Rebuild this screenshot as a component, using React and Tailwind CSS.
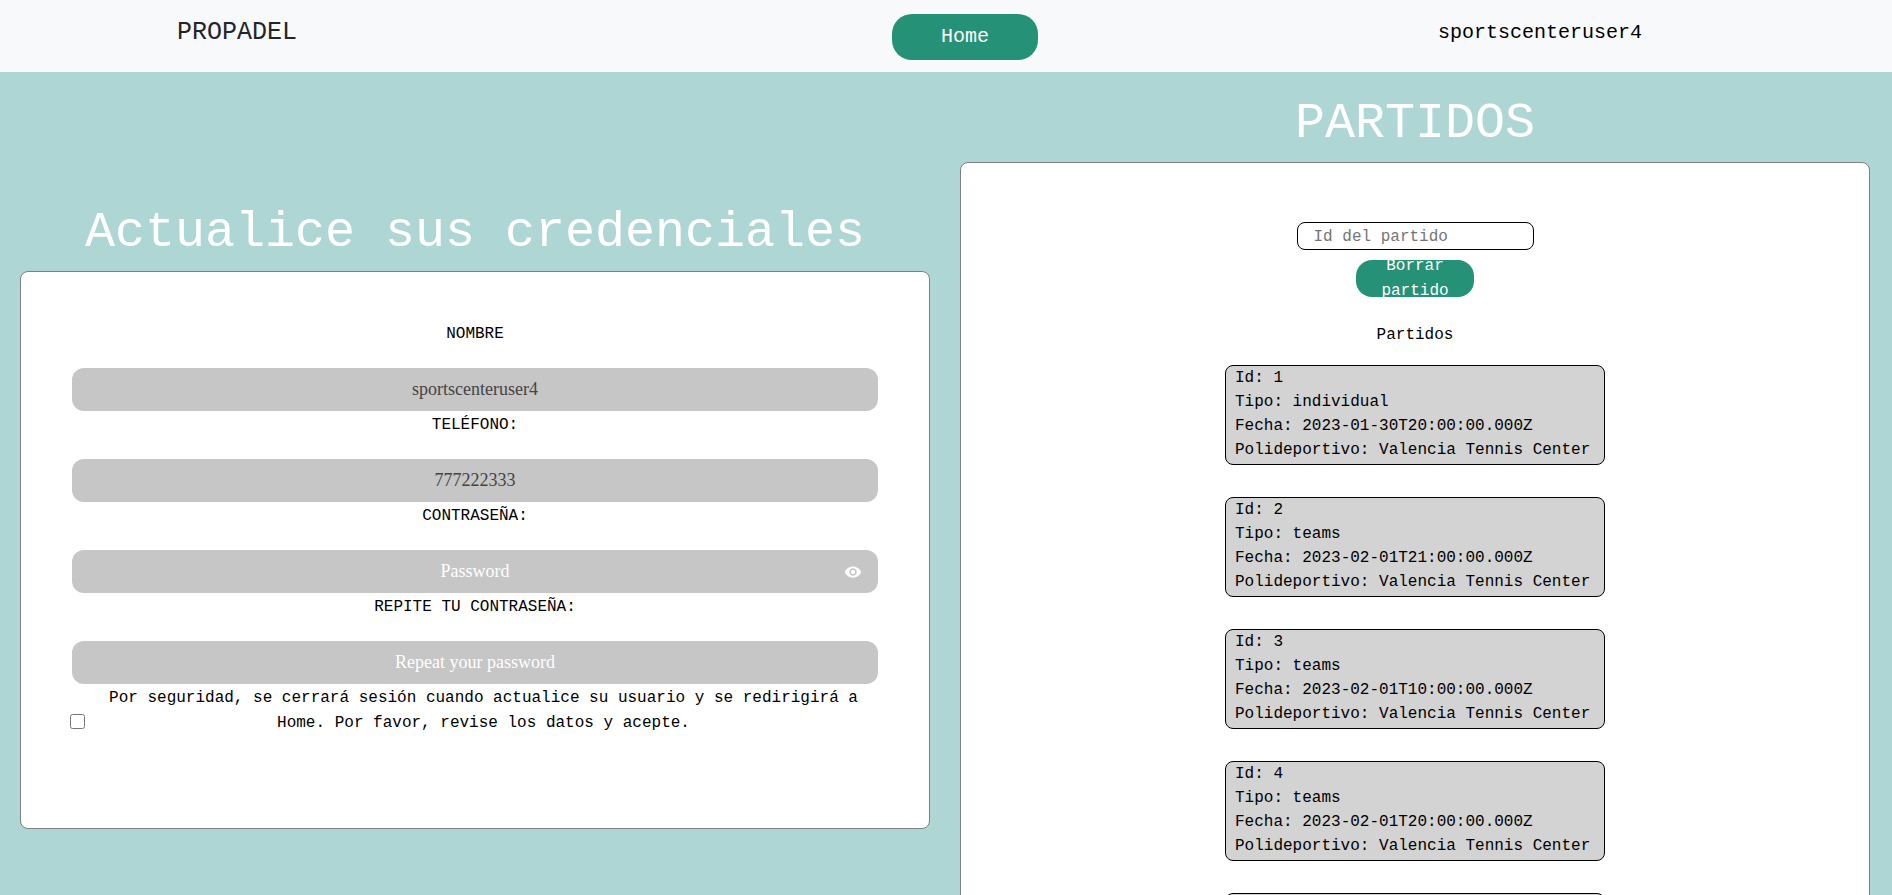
import { MdVisibility } from "react-icons/md";

const matches = [
  { id: 1, type: "individual", date: "2023-01-30T20:00:00.000Z" },
  { id: 2, type: "teams", date: "2023-02-01T21:00:00.000Z" },
  { id: 3, type: "teams", date: "2023-02-01T10:00:00.000Z" },
  { id: 4, type: "teams", date: "2023-02-01T20:00:00.000Z" },
  { id: 5, type: "teams", date: "2023-02-02T20:00:00.000Z" },
];

function Field({ id, label, children, ...props }) {
  return (
    <div className="flex flex-col">
      <label htmlFor={id} className="mb-[22px] pt-0.5 text-center text-black">
        {label}
      </label>
      <div className="relative flex">
        <input
          id={id}
          className="h-[43px] w-full rounded-xl bg-[#c6c6c6] text-center font-['Georgia','Liberation_Serif',serif] text-[18px] text-[#444444] outline-none placeholder:text-white"
          {...props}
        />
        {children}
      </div>
    </div>
  );
}

export default function App() {
  return (
    <div className="h-screen overflow-hidden bg-[#aed6d5] font-['Courier_New','Liberation_Mono',monospace] text-base leading-6 text-[#212529]">
      <nav className="grid h-[72px] grid-cols-[1fr_146px_1fr] items-start bg-[#f8f9fb] pl-[38px]">
        <a href="#" className="mt-[15px] pl-[139px] text-[25px] leading-9 text-[#212529]">
          PROPADEL
        </a>
        <a
          href="#"
          className="mt-[14px] flex h-[46px] items-center justify-center rounded-[20px] bg-[#259277] text-xl text-white"
        >
          Home
        </a>
        <span className="mt-[15px] pl-[400px] text-xl leading-9 text-black">sportscenteruser4</span>
      </nav>

      <main className="grid grid-cols-2 items-start gap-[30px] pr-[22px] pl-5">
        <section className="pt-[131px]">
          <h1 className="mb-2 text-center text-[50px] leading-[60px] text-white">
            Actualice sus credenciales
          </h1>
          <form className="rounded-lg border border-[#808080] bg-white px-[51px] pt-12 pb-[92px]">
            <Field id="name" label="NOMBRE" type="text" defaultValue="sportscenteruser4" />
            <Field id="phone" label="TELÉFONO:" type="text" defaultValue="777222333" />
            <Field id="password" label="CONTRASEÑA:" type="password" placeholder="Password">
              <button
                type="button"
                aria-label="Mostrar contraseña"
                className="absolute inset-y-0 right-4 flex items-center text-white"
              >
                <MdVisibility size={18} />
              </button>
            </Field>
            <Field
              id="repeat"
              label="REPITE TU CONTRASEÑA:"
              type="password"
              placeholder="Repeat your password"
            />
            <div className="-ml-0.5 flex items-end gap-1 pt-0.5">
              <input id="accept" type="checkbox" className="mb-[7px] size-[15px] shrink-0" />
              <label htmlFor="accept" className="grow text-center leading-[25px] text-black">
                Por seguridad, se cerrará sesión cuando actualice su usuario y se redirigirá a
                Home. Por favor, revise los datos y acepte.
              </label>
            </div>
          </form>
        </section>

        <section className="pt-[22px]">
          <h1 className="mb-2 text-center text-[50px] leading-[60px] text-white">PARTIDOS</h1>
          <div className="flex flex-col items-center rounded-lg border border-[#808080] bg-white px-12 pt-[59px] pb-12">
            <input
              type="text"
              aria-label="Id del partido"
              placeholder="Id del partido"
              className="h-7 w-[237px] rounded-lg border border-black px-4 pt-px outline-none placeholder:text-[#757575]"
            />
            <button
              type="button"
              className="mt-2.5 flex h-[37px] w-[118px] items-center justify-center overflow-hidden rounded-2xl bg-[#259277] px-5 text-center leading-[25px] text-white"
            >
              Borrar partido
            </button>
            <h2 className="mt-[26px] text-black">Partidos</h2>
            <ul className="mt-[18px] flex flex-col gap-8">
              {matches.map((match) => (
                <li
                  key={match.id}
                  className="w-[380px] rounded-lg border border-black bg-[#d3d3d3] px-[9px] pb-0.5 text-black"
                >
                  <p>Id: {match.id}</p>
                  <p>Tipo: {match.type}</p>
                  <p>Fecha: {match.date}</p>
                  <p>Polideportivo: Valencia Tennis Center</p>
                </li>
              ))}
            </ul>
          </div>
        </section>
      </main>
    </div>
  );
}
